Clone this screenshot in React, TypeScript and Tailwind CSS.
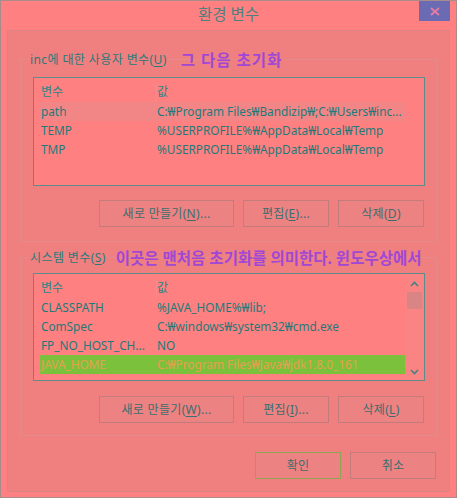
const font = { fontFamily: '"Noto Sans", "Noto Sans CJK KR", sans-serif' };

type Row = { name: string; value: string; selected?: 'soft' | 'green' };

const userVars: Row[] = [
  { name: 'path', value: 'C:₩Program Files₩Bandizip₩;C:₩Users₩inc...', selected: 'soft' },
  { name: 'TEMP', value: '%USERPROFILE%₩AppData₩Local₩Temp' },
  { name: 'TMP', value: '%USERPROFILE%₩AppData₩Local₩Temp' },
];

const systemVars: Row[] = [
  { name: 'CLASSPATH', value: '%JAVA_HOME%₩lib;' },
  { name: 'ComSpec', value: 'C:₩windows₩system32₩cmd.exe' },
  { name: 'FP_NO_HOST_CH...', value: 'NO' },
  { name: 'JAVA_HOME', value: 'C:₩Program Files₩Java₩jdk1.8.0_161', selected: 'green' },
];

function Mn({ k }: { k: string }) {
  return <span className="underline underline-offset-2">{k}</span>;
}

function Btn({ children, w, accent }: { children: React.ReactNode; w: string; accent?: boolean }) {
  return (
    <div
      className={`${w} h-[27px] flex items-center justify-center text-[12px] tracking-[0.3px] text-[#3d6e6e] bg-[#ec8282] border ${
        accent ? 'border-[#8fa456]' : 'border-[#c47b7b]'
      }`}
    >
      {children}
    </div>
  );
}

function Chevron({ up }: { up?: boolean }) {
  return (
    <svg width="9" height="6" viewBox="0 0 9 6" className="block">
      <path
        d={up ? 'M1 5 L4.5 1.5 L8 5' : 'M1 1 L4.5 4.5 L8 1'}
        fill="none"
        stroke="#3f8585"
        strokeWidth="1.6"
      />
    </svg>
  );
}

function VarList({ rows, scroll, h }: { rows: Row[]; scroll?: boolean; h: string }) {
  return (
    <div className={`ml-[12px] w-[392px] ${h} bg-[#ff8080] border border-[#5f8d8d] flex`}>
      <div className="ml-[6px] w-[365px] flex flex-col">
        <div className="h-[24px] pt-[4px] flex items-center text-[12px] text-[#2a8585]">
          <div className="w-[117px] pl-[1px] border-r border-[#f78b8b]">변수</div>
          <div className="flex-1">값</div>
        </div>
        {rows.map((r) => (
          <div
            key={r.name}
            className={`h-[19px] flex items-center text-[11.8px] ${
              r.selected === 'green'
                ? 'bg-[#7cc13c] text-[#e3a04e]'
                : r.selected === 'soft'
                ? 'bg-[#f28686] text-[#1e7a7a]'
                : 'text-[#1e7a7a]'
            }`}
          >
            <div className="w-[117px] pl-[1px] truncate whitespace-nowrap">{r.name}</div>
            <div className="flex-1 whitespace-nowrap overflow-hidden">{r.value}</div>
          </div>
        ))}
      </div>
      {scroll && (
        <div className="ml-[1px] w-[17px] bg-[#fa8484] flex flex-col items-center">
          <div className="h-[17px] flex items-center justify-center mt-[1px]">
            <Chevron up />
          </div>
          <div className="w-[15px] h-[17px] bg-[#d98585]" />
          <div className="flex-1" />
          <div className="h-[17px] flex items-center justify-center">
            <Chevron />
          </div>
        </div>
      )}
    </div>
  );
}

function Note({ children, wide }: { children: React.ReactNode; wide?: boolean }) {
  return (
    <span
      className={`text-[15.5px] font-bold text-[#a047d6] whitespace-nowrap leading-[20px] ${
        wide ? 'tracking-[1px]' : ''
      }`}
    >
      {children}
    </span>
  );
}

export default function App() {
  return (
    <div
      style={font}
      className="w-[457px] h-[498px] overflow-hidden bg-[#ff8080] border border-[#a88b8b] flex flex-col"
    >
      {/* Title bar */}
      <div className="h-[29px] grid grid-cols-[1fr_auto_1fr]">
        <div />
        <div className="text-[15.5px] text-[#4f8080] leading-[29px] -mt-[1px]">환경 변수</div>
        <div className="flex justify-end items-start">
          <div className="mr-[6px] w-[31px] h-[20px] bg-[#6b6bb3] flex items-center justify-center">
            <svg width="10" height="9" viewBox="0 0 10 9">
              <path d="M1 1 L9 8 M9 1 L1 8" stroke="#e57ca2" strokeWidth="1.8" />
            </svg>
          </div>
        </div>
      </div>

      {/* Dialog body */}
      <div className="mx-[6px] h-[462px] bg-[#f08080] border border-[#dc8484] flex flex-col">
        {/* User variables */}
        <div className="mt-[28px] mx-[12px] h-[183px] border border-[#e48a8a] flex flex-col">
          <div className="-mt-[10px] ml-[8px] h-[19px] flex items-center gap-[13px]">
            <span className="bg-[#f08080] px-[1px] text-[12px] tracking-[0.4px] text-[#2a7a7a] whitespace-nowrap">
              inc에 대한 사용자 변수(<Mn k="U" />)
            </span>
            <Note wide>그 다음 초기화</Note>
          </div>
          <div className="mt-[8px]">
            <VarList rows={userVars} h="h-[109px]" />
          </div>
          <div className="mt-[14px] mr-[12px] flex justify-end gap-[9px]">
            <Btn w="w-[135px]">
              새로 만들기(<Mn k="N" />)...
            </Btn>
            <Btn w="w-[86px]">
              편집(<Mn k="E" />)...
            </Btn>
            <Btn w="w-[86px]">
              삭제(<Mn k="D" />)
            </Btn>
          </div>
        </div>

        {/* System variables */}
        <div className="mt-[15px] mx-[12px] h-[179px] border border-[#e48a8a] flex flex-col">
          <div className="-mt-[10px] ml-[8px] h-[19px] flex items-center gap-[9px]">
            <span className="bg-[#f08080] px-[1px] text-[12px] tracking-[0.4px] text-[#2a7a7a] whitespace-nowrap">
              시스템 변수(<Mn k="S" />)
            </span>
            <Note>이곳은 맨처음 초기화를 의미한다. 윈도우상에서</Note>
          </div>
          <div className="mt-[6px]">
            <VarList rows={systemVars} scroll h="h-[108px]" />
          </div>
          <div className="mt-[15px] mr-[12px] flex justify-end gap-[9px]">
            <Btn w="w-[135px]">
              새로 만들기(<Mn k="W" />)...
            </Btn>
            <Btn w="w-[86px]">
              편집(<Mn k="I" />)...
            </Btn>
            <Btn w="w-[86px]">
              삭제(<Mn k="L" />)
            </Btn>
          </div>
        </div>

        {/* Dialog buttons */}
        <div className="mt-[16px] mr-[13px] flex justify-end gap-[9px]">
          <Btn w="w-[86px]" accent>
            확인
          </Btn>
          <Btn w="w-[86px]">취소</Btn>
        </div>
      </div>
    </div>
  );
}
